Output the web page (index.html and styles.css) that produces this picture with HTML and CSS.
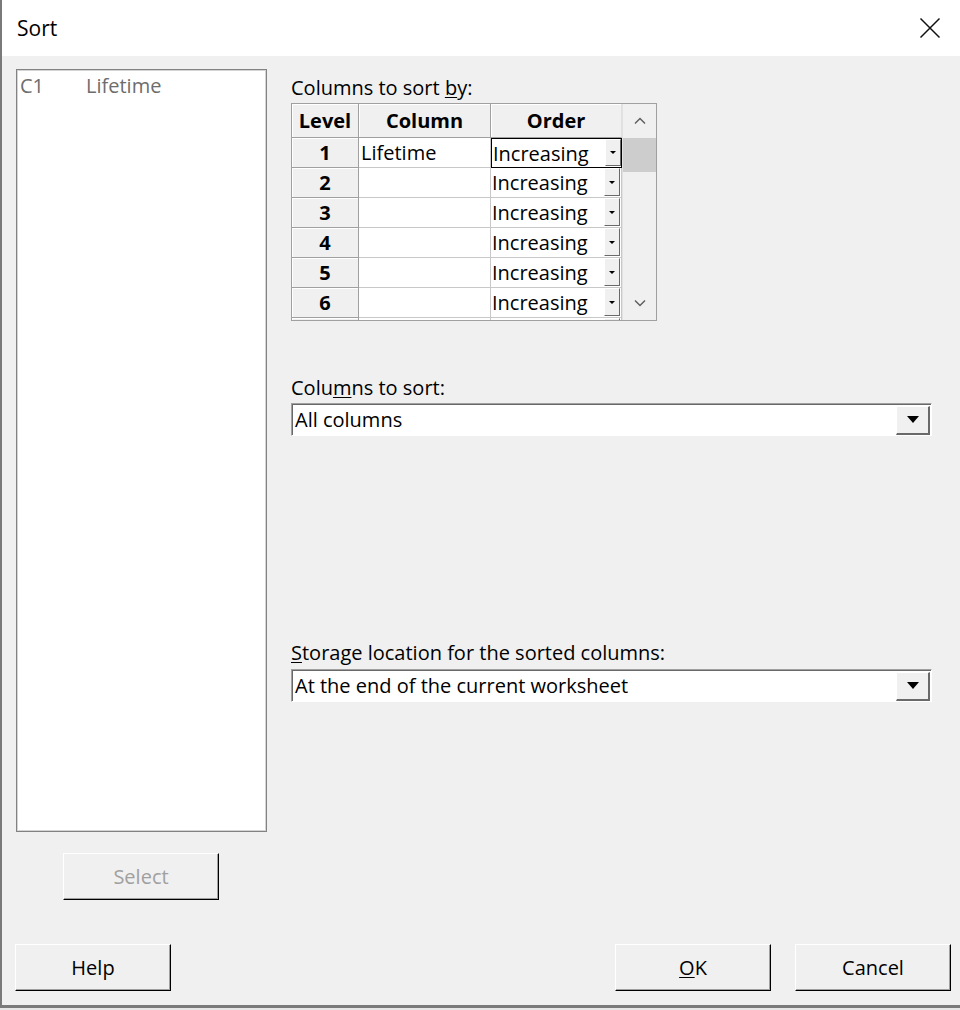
FILE: index.html
```html
<!DOCTYPE html>
<html>
<head>
<meta charset="utf-8">
<link rel="stylesheet" href="styles.css">
</head>
<body>
<div class="window">
  <div class="titlebar">
    <span class="title">Sort</span>
    <svg class="close" width="22" height="22" viewBox="0 0 22 22"><path d="M1.5 1.5 L20.5 20.5 M20.5 1.5 L1.5 20.5" stroke="#111" stroke-width="1.5" fill="none"/></svg>
  </div>
  <div class="client">
    <div class="main">
      <div class="left">
        <div class="listbox">
          <div class="item"><span class="cnum">C1</span><span class="cname">Lifetime</span></div>
        </div>
        <button class="btn select" disabled>Select</button>
      </div>
      <div class="right">
        <div class="label l1">Columns to sort <u>b</u>y:</div>
        <div class="grid">
          <div class="table">
            <div class="row head">
              <div class="cell lvl">Level</div>
              <div class="cell col">Column</div>
              <div class="cell ord">Order</div>
            </div>
            <div class="row">
              <div class="cell lvl">1</div>
              <div class="cell col">Lifetime</div>
              <div class="cell ord focus"><span class="otext">Increasing</span><span class="mini"><i></i></span></div>
            </div>
            <div class="row">
              <div class="cell lvl">2</div>
              <div class="cell col"></div>
              <div class="cell ord"><span class="otext">Increasing</span><span class="mini"><i></i></span></div>
            </div>
            <div class="row">
              <div class="cell lvl">3</div>
              <div class="cell col"></div>
              <div class="cell ord"><span class="otext">Increasing</span><span class="mini"><i></i></span></div>
            </div>
            <div class="row">
              <div class="cell lvl">4</div>
              <div class="cell col"></div>
              <div class="cell ord"><span class="otext">Increasing</span><span class="mini"><i></i></span></div>
            </div>
            <div class="row">
              <div class="cell lvl">5</div>
              <div class="cell col"></div>
              <div class="cell ord"><span class="otext">Increasing</span><span class="mini"><i></i></span></div>
            </div>
            <div class="row">
              <div class="cell lvl">6</div>
              <div class="cell col"></div>
              <div class="cell ord"><span class="otext">Increasing</span><span class="mini"><i></i></span></div>
            </div>
            <div class="row">
              <div class="cell lvl"></div>
              <div class="cell col"></div>
              <div class="cell ord"><span class="otext"></span><span class="mini"></span></div>
            </div>
          </div>
          <div class="scrollbar">
            <div class="sbtn"><svg width="12" height="8" viewBox="0 0 12 8"><path d="M1 6.5 L6 1.5 L11 6.5" stroke="#606060" stroke-width="1.5" fill="none"/></svg></div>
            <div class="track"><div class="thumb"></div></div>
            <div class="sbtn"><svg width="12" height="8" viewBox="0 0 12 8"><path d="M1 1.5 L6 6.5 L11 1.5" stroke="#606060" stroke-width="1.5" fill="none"/></svg></div>
          </div>
        </div>
        <div class="label l2">Colu<u>m</u>ns to sort:</div>
        <div class="combo">
          <span class="ctext">All columns</span>
          <span class="cbtn"><i></i></span>
        </div>
        <div class="label l3"><u>S</u>torage location for the sorted columns:</div>
        <div class="combo">
          <span class="ctext">At the end of the current worksheet</span>
          <span class="cbtn"><i></i></span>
        </div>
      </div>
    </div>
    <div class="footer">
      <button class="btn">Help</button>
      <div class="spacer"></div>
      <button class="btn"><u>O</u>K</button>
      <button class="btn">Cancel</button>
    </div>
  </div>
</div>
</body>
</html>
```

FILE: styles.css
```css
* { box-sizing: border-box; }
html, body { margin: 0; padding: 0; }
body {
  background: #e6e6e6;
  font-family: "Open Sans", "Noto Sans", sans-serif;
  font-size: 20px;
  color: #000;
  width: 960px;
  height: 1010px;
  overflow: hidden;
}
.window {
  width: 960px;
  height: 1008px;
  display: flex;
  flex-direction: column;
  border-left: 2px solid #7a7a7a;
  border-bottom: 3px solid #7a7a7a;
  background: #f0f0f0;
}
.titlebar {
  height: 56px;
  flex: none;
  background: #fff;
  display: flex;
  align-items: center;
  padding-left: 15px;
  padding-right: 19px;
}
.title {
  font-size: 21px;
  flex: 1;
}
.close { display: block; }
.client {
  flex: 1;
  display: flex;
  flex-direction: column;
}
.main {
  display: flex;
  padding-top: 13px;
  padding-left: 14px;
}
.left {
  width: 251px;
  display: flex;
  flex-direction: column;
}
.listbox {
  height: 763px;
  background: #fff;
  border: 1px solid #828282;
  box-shadow: inset 1px 1px 0 #d4d4d4, inset -1px -1px 0 #d4d4d4;
  padding: 2px 3px;
}
.item {
  display: flex;
  color: #6d6d6d;
  line-height: 28px;
}
.cnum { width: 66px; }
.btn {
  width: 156px;
  height: 47px;
  background: #f0f0f0;
  border: 1px solid;
  border-color: #fff #000 #000 #fff;
  box-shadow: inset -1px -1px 0 #a0a0a0;
  font-family: inherit;
  font-size: 20px;
  color: #000;
  padding: 0;
}
.btn.select {
  margin-top: 21px;
  margin-left: 47px;
  color: #a0a0a0;
}
.right {
  margin-left: 24px;
  padding-top: 7px;
  display: flex;
  flex-direction: column;
  width: 641px;
}
.label {
  line-height: 24px;
  height: 24px;
}
.l1 { margin-bottom: 3px; }
.l2 { margin-top: 55px; margin-bottom: 3px; }
.l3 { margin-top: 205px; margin-bottom: 4px; }
u { text-decoration-thickness: 1px; text-underline-offset: 2px; }

.grid {
  width: 366px;
  height: 218px;
  border: 1px solid #a0a0a0;
  display: flex;
  overflow: hidden;
  background: #fff;
}
.table {
  width: 330px;
  flex: none;
}
.row {
  display: flex;
  height: 30px;
}
.row.head { height: 34px; }
.cell {
  height: 100%;
  border-right: 1px solid #c8c8c8;
  border-bottom: 1px solid #c8c8c8;
  display: flex;
  align-items: center;
  white-space: nowrap;
  overflow: hidden;
}
.lvl {
  width: 67px;
  justify-content: center;
  font-weight: bold;
  background: #f0f0f0;
  border-right-color: #a0a0a0;
  border-bottom-color: #a0a0a0;
  box-shadow: inset 1px 1px 0 #fff;
}
.col { width: 132px; padding-left: 2px; }
.ord { width: 131px; padding-left: 1px; }
.head .cell {
  background: #f0f0f0;
  font-weight: bold;
  justify-content: center;
  padding-left: 0;
  border-right-color: #a0a0a0;
  border-bottom-color: #a0a0a0;
  box-shadow: inset 1px 1px 0 #fff;
}
.head .ord { border-right-color: #e0e0e0; }
.otext { flex: 1; }
.ord.focus { border: 1px solid #000; padding-left: 1px; }
.mini {
  width: 16px;
  height: 28px;
  flex: none;
  margin-right: 1px;
  background: #f0f0f0;
  border-left: 1px solid #fff;
  border-top: 1px solid #fff;
  border-right: 1px solid #696969;
  border-bottom: 1px solid #696969;
  display: flex;
  align-items: center;
  justify-content: center;
  align-self: flex-start;
}
.focus .mini { margin-right: 0; height: 27px; }
.mini i {
  width: 0; height: 0;
  border-left: 3px solid transparent;
  border-right: 3px solid transparent;
  border-top: 3px solid #000;
}
.scrollbar {
  flex: 1;
  background: #f0f0f0;
  border-left: 1px solid #e2e2e2;
  display: flex;
  flex-direction: column;
}
.sbtn {
  height: 34px;
  flex: none;
  display: flex;
  align-items: center;
  justify-content: center;
}
.track { flex: 1; }
.thumb {
  height: 34px;
  background: #cdcdcd;
}
.combo {
  height: 33px;
  width: 641px;
  display: flex;
  align-items: center;
  background: #fff;
  border-top: 1px solid #a0a0a0;
  border-left: 1px solid #a0a0a0;
  border-right: 1px solid #fff;
  border-bottom: 1px solid #fff;
  box-shadow: inset 1px 1px 0 #696969;
}
.ctext { flex: 1; padding-left: 3px; padding-bottom: 1px; }
.cbtn {
  width: 34px;
  height: 29px;
  margin-right: 1px;
  margin-top: 1px;
  background: #f0f0f0;
  border-top: 1px solid #fff;
  border-left: 1px solid #fff;
  border-right: 2px solid #696969;
  border-bottom: 2px solid #696969;
  display: flex;
  align-items: center;
  justify-content: center;
}
.cbtn i {
  width: 0; height: 0;
  border-left: 6px solid transparent;
  border-right: 6px solid transparent;
  border-top: 7px solid #000;
}
.footer {
  margin-top: auto;
  display: flex;
  gap: 24px;
  padding-left: 13px;
  padding-right: 9px;
  padding-bottom: 14px;
}
.spacer { flex: 1; }
```
